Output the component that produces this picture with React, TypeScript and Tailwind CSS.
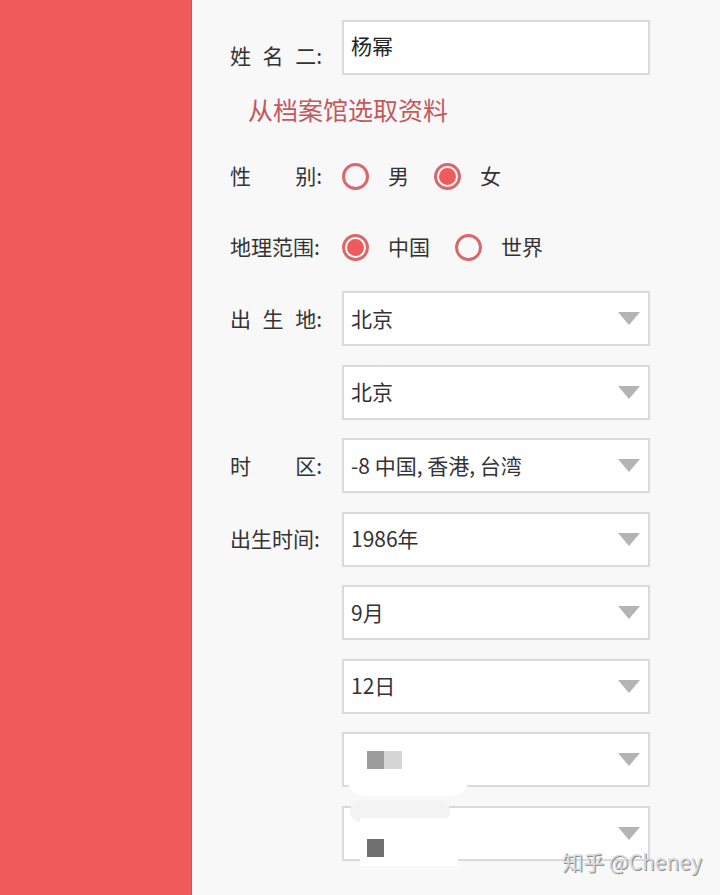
import React from "react";

const font = { fontFamily: '"Noto Sans CJK SC", "Noto Sans", sans-serif' };

function Label({ parts }: { parts: string[] }) {
  return (
    <div className="w-[92px] flex justify-between text-[21px] text-[#333] shrink-0">
      {parts.map((p, i) => (
        <span key={i}>{p}</span>
      ))}
    </div>
  );
}

function Radio({ checked }: { checked?: boolean }) {
  return (
    <span className="w-[27px] h-[27px] rounded-full border-[3px] border-[#d9676b] flex items-center justify-center shrink-0">
      {checked && <span className="w-[17px] h-[17px] rounded-full bg-[#f05a5a]" />}
    </span>
  );
}

function Select({ value }: { value?: React.ReactNode }) {
  return (
    <div className="relative w-[308px] h-[55px] border-2 border-[#dadada] bg-white flex items-center justify-between pl-[7px] pr-[8px]">
      <span className="text-[21px] text-[#333]">{value}</span>
      <svg width="22" height="13" viewBox="0 0 22 13">
        <path d="M0 0 L22 0 L11 13 Z" fill="#b4b4b4" />
      </svg>
    </div>
  );
}

function Row({ label, children }: { label?: string[]; children: React.ReactNode }) {
  return (
    <div className="flex items-center h-[55px]">
      <div className="w-[112px] shrink-0">{label && <Label parts={label} />}</div>
      {children}
    </div>
  );
}

export default function App() {
  return (
    <div className="w-[720px] h-[895px] flex overflow-hidden bg-[#f9f8f8]" style={font}>
      <div className="w-[192px] shrink-0 bg-[#f05a5a] border-r border-[#d84a4c]" />
      <div className="relative flex-1 pl-[38px] pt-[20px]">
        <div className="flex items-center h-[55px]">
          <div className="w-[112px] shrink-0 pt-[16px]">
            <Label parts={["姓", "名", "二:"]} />
          </div>
          <div className="w-[308px] h-[55px] border-2 border-[#dadada] bg-white flex items-center pl-[7px] pb-[3px]">
            <span className="text-[21px] text-[#222]">杨幂</span>
          </div>
        </div>
        <div className="h-[70px] flex items-center pl-[18px]">
          <span className="text-[25px] text-[#c4585d]">从档案馆选取资料</span>
        </div>
        <div className="h-[62px] flex items-center">
          <div className="w-[112px]">
            <Label parts={["性", "别:"]} />
          </div>
          <Radio />
          <span className="ml-[19px] mr-[25px] text-[21px] text-[#333]">男</span>
          <Radio checked />
          <span className="ml-[19px] text-[21px] text-[#333]">女</span>
        </div>
        <div className="h-[80px] flex items-center">
          <div className="w-[112px]">
            <Label parts={["地理范围:"]} />
          </div>
          <Radio checked />
          <span className="ml-[19px] mr-[25px] text-[21px] text-[#333]">中国</span>
          <Radio />
          <span className="ml-[19px] text-[21px] text-[#333]">世界</span>
        </div>
        <div className="mt-[4px] flex flex-col gap-[18.5px]">
          <Row label={["出", "生", "地:"]}>
            <Select value="北京" />
          </Row>
          <Row>
            <Select value="北京" />
          </Row>
          <Row label={["时", "区:"]}>
            <Select value="-8 中国, 香港, 台湾" />
          </Row>
          <Row label={["出生时间:"]}>
            <Select value="1986年" />
          </Row>
          <Row>
            <Select value="9月" />
          </Row>
          <Row>
            <Select value="12日" />
          </Row>
          <Row>
            <div className="relative">
              <Select />
              <div className="absolute left-[4px] top-[2px] w-[124px] h-[62px] bg-white rounded-b-[20px]" />
              <div className="absolute left-[25px] top-[19px] flex">
                <span className="w-[17px] h-[18px] bg-[#9c9c9c]" />
                <span className="w-[18px] h-[18px] bg-[#d6d6d6]" />
              </div>
            </div>
          </Row>
          <Row>
            <div className="relative">
              <Select />
              <div className="absolute left-[8px] top-[-6px] w-[100px] h-[22px] bg-[#f3f3f3] rounded-[12px]" />
              <div className="absolute left-[18px] top-[12px] w-[98px] h-[48px] bg-white" />
              <span className="absolute left-[25px] top-[33px] w-[17px] h-[18px] bg-[#707070]" />
            </div>
          </Row>
        </div>
        <div
          className="absolute right-[18px] bottom-[18px] text-[21px] text-[#dadada]"
          style={{ textShadow: "1px 1px 0 #8a8a8a" }}
        >
          知乎 @Cheney
        </div>
      </div>
    </div>
  );
}
